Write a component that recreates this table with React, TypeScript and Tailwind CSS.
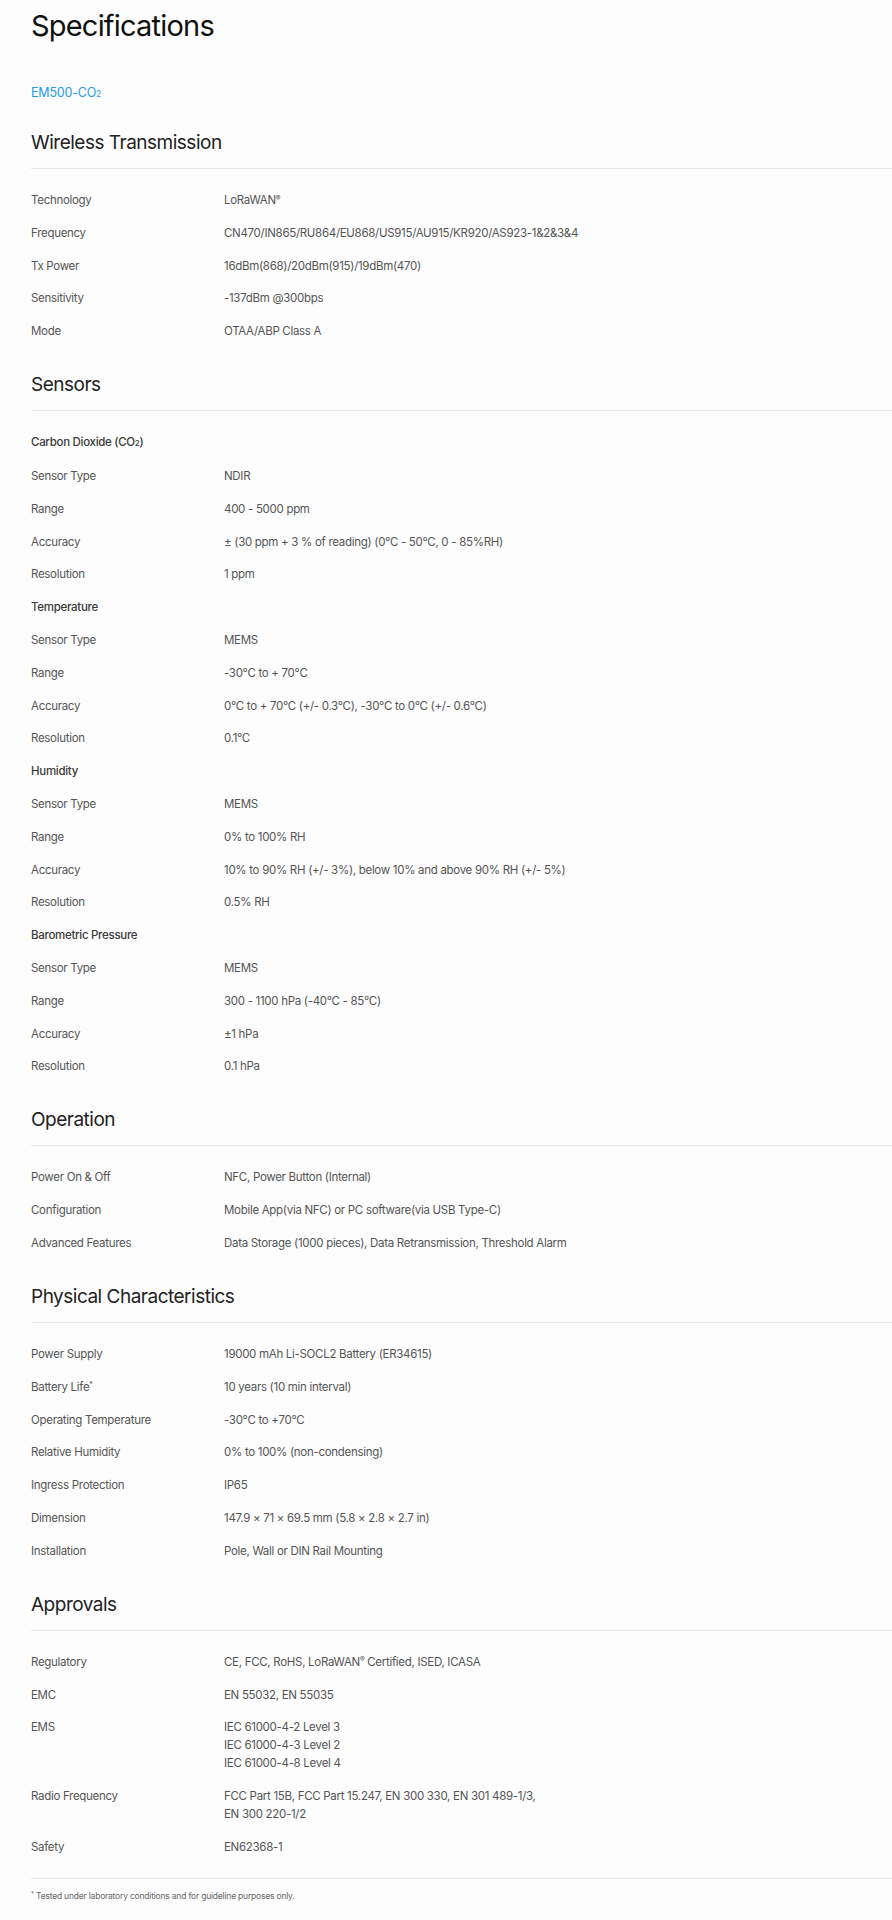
import React from "react";

type Row = { label: React.ReactNode; value: React.ReactNode; sub?: boolean };

const sup = (t: string) => <sup className="text-[7px]">{t}</sup>;
const sub2 = <span className="text-[8px]">2</span>;

const sections: { title: string; rows: Row[] }[] = [
  {
    title: "Wireless Transmission",
    rows: [
      { label: "Technology", value: <>LoRaWAN{sup("®")}</> },
      { label: "Frequency", value: "CN470/IN865/RU864/EU868/US915/AU915/KR920/AS923-1&2&3&4" },
      { label: "Tx Power", value: "16dBm(868)/20dBm(915)/19dBm(470)" },
      { label: "Sensitivity", value: "-137dBm @300bps" },
      { label: "Mode", value: "OTAA/ABP Class A" },
    ],
  },
  {
    title: "Sensors",
    rows: [
      { label: <>Carbon Dioxide (CO{sub2})</>, value: null, sub: true },
      { label: "Sensor Type", value: "NDIR" },
      { label: "Range", value: "400 - 5000 ppm" },
      { label: "Accuracy", value: "± (30 ppm + 3 % of reading) (0°C - 50°C, 0 - 85%RH)" },
      { label: "Resolution", value: "1 ppm" },
      { label: "Temperature", value: null, sub: true },
      { label: "Sensor Type", value: "MEMS" },
      { label: "Range", value: "-30°C to + 70°C" },
      { label: "Accuracy", value: "0°C to + 70°C (+/- 0.3°C), -30°C to 0°C (+/- 0.6°C)" },
      { label: "Resolution", value: "0.1°C" },
      { label: "Humidity", value: null, sub: true },
      { label: "Sensor Type", value: "MEMS" },
      { label: "Range", value: "0% to 100% RH" },
      { label: "Accuracy", value: "10% to 90% RH (+/- 3%), below 10% and above 90% RH (+/- 5%)" },
      { label: "Resolution", value: "0.5% RH" },
      { label: "Barometric Pressure", value: null, sub: true },
      { label: "Sensor Type", value: "MEMS" },
      { label: "Range", value: "300 - 1100 hPa (-40°C - 85°C)" },
      { label: "Accuracy", value: "±1 hPa" },
      { label: "Resolution", value: "0.1 hPa" },
    ],
  },
  {
    title: "Operation",
    rows: [
      { label: "Power On & Off", value: "NFC, Power Button (Internal)" },
      { label: "Configuration", value: "Mobile App(via NFC) or PC software(via USB Type-C)" },
      { label: "Advanced Features", value: "Data Storage (1000 pieces), Data Retransmission, Threshold Alarm" },
    ],
  },
  {
    title: "Physical Characteristics",
    rows: [
      { label: "Power Supply", value: "19000 mAh Li-SOCL2 Battery (ER34615)" },
      { label: <>Battery Life{sup("*")}</>, value: "10 years (10 min interval)" },
      { label: "Operating Temperature", value: "-30°C to +70°C" },
      { label: "Relative Humidity", value: "0% to 100% (non-condensing)" },
      { label: "Ingress Protection", value: "IP65" },
      { label: "Dimension", value: "147.9 × 71 × 69.5 mm (5.8 × 2.8 × 2.7 in)" },
      { label: "Installation", value: "Pole, Wall or DIN Rail Mounting" },
    ],
  },
  {
    title: "Approvals",
    rows: [
      { label: "Regulatory", value: <>CE, FCC, RoHS, LoRaWAN{sup("®")} Certified, ISED, ICASA</> },
      { label: "EMC", value: "EN 55032, EN 55035" },
      {
        label: "EMS",
        value: (
          <>
            IEC 61000-4-2 Level 3<br />
            IEC 61000-4-3 Level 2<br />
            IEC 61000-4-8 Level 4
          </>
        ),
      },
      {
        label: "Radio Frequency",
        value: (
          <>
            FCC Part 15B, FCC Part 15.247, EN 300 330, EN 301 489-1/3,
            <br />
            EN 300 220-1/2
          </>
        ),
      },
      { label: "Safety", value: "EN62368-1" },
    ],
  },
];

export default function App() {
  return (
    <main className="min-h-[1920px] w-full overflow-hidden bg-[#fdfdfd] pl-[31px] font-['Inter','Liberation_Sans',sans-serif]">
      <h1 className="pt-2 text-[29px] leading-[36px] font-normal tracking-[-0.8px] text-[#111]">
        Specifications
      </h1>

      <p className="mt-[39px] text-[12.5px] leading-5 tracking-[-0.2px] text-[#1e9bea]">
        EM500-CO<span className="text-[8.5px]">2</span>
      </p>

      <div className="mt-[25px] flex flex-col gap-[31px]">
        {sections.map((s) => (
          <section key={s.title}>
            <h2 className="border-b border-[#e8e8e8] pb-[11px] text-[19px] leading-7 tracking-[-0.5px] text-[#222]">
              {s.title}
            </h2>
            <div className="mt-[22px] flex flex-col gap-[14.8px]">
              {s.rows.map((r, i) => (
                <div
                  key={i}
                  className="grid grid-cols-[193px_1fr] text-[11.5px] leading-[18px] tracking-[-0.3px]"
                >
                  <div className={r.sub ? "font-medium text-[#3a3a3a]" : "text-[#555]"}>{r.label}</div>
                  <div className="text-[#555]">{r.value}</div>
                </div>
              ))}
            </div>
          </section>
        ))}
      </div>

      <div className="mt-[22px] border-t border-[#e8e8e8] pt-[11px] text-[8.5px] leading-3 tracking-[-0.2px] text-[#666]">
        <sup className="text-[6px]">*</sup> Tested under laboratory conditions and for guideline purposes only.
      </div>
    </main>
  );
}
